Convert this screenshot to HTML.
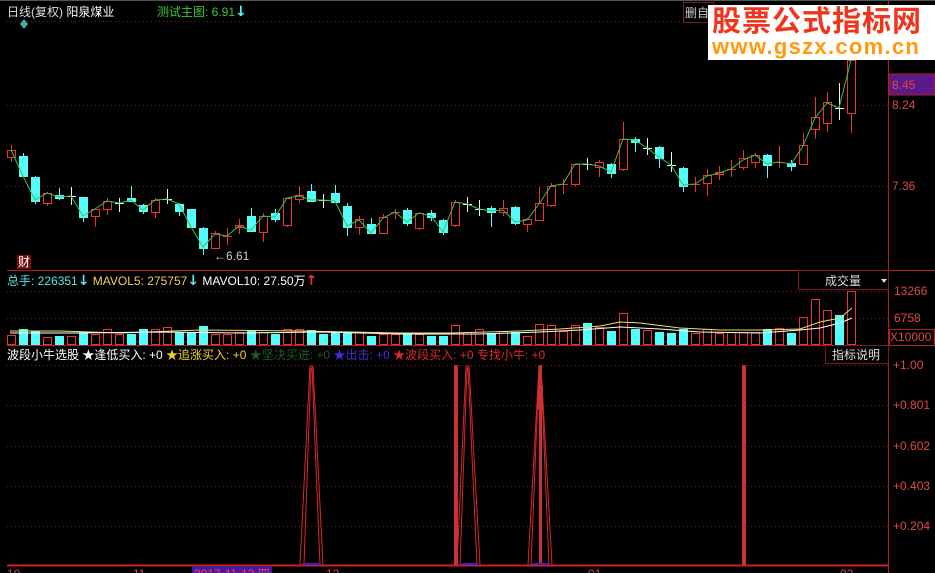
<!DOCTYPE html>
<html><head><meta charset="utf-8"><style>
html,body{margin:0;padding:0;background:#000;width:935px;height:573px;overflow:hidden;position:relative;font-family:"Liberation Sans","Noto Sans CJK SC",sans-serif;}
.t{position:absolute;white-space:nowrap;font-size:12px;line-height:14px;}
.a{font-weight:bold;font-size:14px;font-family:"DejaVu Sans",sans-serif;}
</style></head><body>
<svg width="935" height="573" style="position:absolute;left:0;top:0" shape-rendering="crispEdges">
<line x1="0" y1="0.5" x2="935" y2="0.5" stroke="#555"/>
<g stroke="#7a1a1a" stroke-dasharray="1,3">
<line x1="7" y1="21.5" x2="888" y2="21.5"/>
<line x1="7" y1="105.5" x2="888" y2="105.5"/>
<line x1="7" y1="186.5" x2="888" y2="186.5"/>
<line x1="7" y1="291.5" x2="888" y2="291.5"/>
<line x1="7" y1="318.5" x2="888" y2="318.5"/>
<line x1="7" y1="365.5" x2="888" y2="365.5"/>
<line x1="7" y1="405.5" x2="888" y2="405.5"/>
<line x1="7" y1="446.5" x2="888" y2="446.5"/>
<line x1="7" y1="486.5" x2="888" y2="486.5"/>
<line x1="7" y1="526.5" x2="888" y2="526.5"/>
</g>
<g stroke="#b02020">
<line x1="888.5" y1="0" x2="888.5" y2="573"/>
<line x1="7" y1="270.5" x2="935" y2="270.5"/>
<line x1="7" y1="345.5" x2="935" y2="345.5"/>
<line x1="7" y1="565.5" x2="888" y2="565.5" stroke="#d02020" stroke-width="2"/>
</g>
<g stroke-width="1">
<g stroke="#f03232" fill="#000">
<line x1="11.5" y1="145" x2="11.5" y2="162"/><rect x="7.5" y="150.5" width="8" height="7"/>
<line x1="47.5" y1="192" x2="47.5" y2="206"/><rect x="43.5" y="193.5" width="8" height="10"/>
<line x1="95.5" y1="209" x2="95.5" y2="227"/><rect x="91.5" y="209.5" width="8" height="7"/>
<line x1="107.5" y1="198" x2="107.5" y2="215"/><rect x="103.5" y="201.5" width="8" height="8"/>
<line x1="155.5" y1="198" x2="155.5" y2="218"/><rect x="151.5" y="200.5" width="8" height="12"/>
<line x1="215.5" y1="231" x2="215.5" y2="249"/><rect x="211.5" y="233.5" width="8" height="15"/>
<line x1="239.5" y1="219" x2="239.5" y2="234"/><rect x="235.5" y="225.5" width="8" height="2"/>
<line x1="263.5" y1="213" x2="263.5" y2="242"/><rect x="259.5" y="216.5" width="8" height="16"/>
<line x1="287.5" y1="198" x2="287.5" y2="227"/><rect x="283.5" y="198.5" width="8" height="27"/>
<line x1="299.5" y1="186" x2="299.5" y2="203"/><rect x="295.5" y="195.5" width="8" height="4"/>
<line x1="359.5" y1="216" x2="359.5" y2="235"/><rect x="355.5" y="219.5" width="8" height="8"/>
<line x1="383.5" y1="214" x2="383.5" y2="234"/><rect x="379.5" y="217.5" width="8" height="16"/>
<line x1="419.5" y1="212" x2="419.5" y2="230"/><rect x="415.5" y="213.5" width="8" height="15"/>
<line x1="455.5" y1="200" x2="455.5" y2="227"/><rect x="451.5" y="202.5" width="8" height="23"/>
<line x1="503.5" y1="200" x2="503.5" y2="216"/><rect x="499.5" y="208.5" width="8" height="4"/>
<line x1="527.5" y1="218" x2="527.5" y2="232"/><rect x="523.5" y="219.5" width="8" height="5"/>
<line x1="539.5" y1="187" x2="539.5" y2="221"/><rect x="535.5" y="203.5" width="8" height="17"/>
<line x1="551.5" y1="183" x2="551.5" y2="207"/><rect x="547.5" y="186.5" width="8" height="19"/>
<line x1="575.5" y1="164" x2="575.5" y2="186"/><rect x="571.5" y="164.5" width="8" height="20"/>
<line x1="599.5" y1="160" x2="599.5" y2="177"/><rect x="595.5" y="162.5" width="8" height="5"/>
<line x1="623.5" y1="122" x2="623.5" y2="171"/><rect x="619.5" y="139.5" width="8" height="30"/>
<line x1="707.5" y1="169" x2="707.5" y2="196"/><rect x="703.5" y="175.5" width="8" height="8"/>
<line x1="719.5" y1="166" x2="719.5" y2="180"/><rect x="715.5" y="172.5" width="8" height="2"/>
<line x1="743.5" y1="150" x2="743.5" y2="170"/><rect x="739.5" y="158.5" width="8" height="9"/>
<line x1="755.5" y1="153" x2="755.5" y2="168"/><rect x="751.5" y="155.5" width="8" height="7"/>
<line x1="803.5" y1="133" x2="803.5" y2="165"/><rect x="799.5" y="145.5" width="8" height="19"/>
<line x1="815.5" y1="97" x2="815.5" y2="139"/><rect x="811.5" y="117.5" width="8" height="12"/>
<line x1="827.5" y1="92" x2="827.5" y2="132"/><rect x="823.5" y="102.5" width="8" height="21"/>
<line x1="851.5" y1="55" x2="851.5" y2="133"/><rect x="847.5" y="60.5" width="8" height="53"/>
</g>
<g stroke="#f03232">
<line x1="227.5" y1="228" x2="227.5" y2="245"/><line x1="223" y1="236.5" x2="232" y2="236.5"/>
<line x1="395.5" y1="209" x2="395.5" y2="219"/><line x1="391" y1="212.5" x2="400" y2="212.5"/>
<line x1="563.5" y1="179" x2="563.5" y2="194"/><line x1="559" y1="184.5" x2="568" y2="184.5"/>
<line x1="695.5" y1="177" x2="695.5" y2="192"/><line x1="691" y1="184.5" x2="700" y2="184.5"/>
<line x1="731.5" y1="160" x2="731.5" y2="177"/><line x1="727" y1="169.5" x2="736" y2="169.5"/>
<line x1="779.5" y1="146" x2="779.5" y2="168"/><line x1="775" y1="162.5" x2="784" y2="162.5"/>
</g>
<g stroke="#54fcfc" fill="#54fcfc">
<line x1="23.5" y1="153" x2="23.5" y2="176"/><rect x="19.5" y="156.5" width="8" height="20"/>
<line x1="35.5" y1="176" x2="35.5" y2="204"/><rect x="31.5" y="177.5" width="8" height="24"/>
<line x1="59.5" y1="188" x2="59.5" y2="200"/><rect x="55.5" y="195.5" width="8" height="3"/>
<line x1="83.5" y1="197" x2="83.5" y2="222"/><rect x="79.5" y="197.5" width="8" height="20"/>
<line x1="131.5" y1="186" x2="131.5" y2="202"/><rect x="127.5" y="198.5" width="8" height="3"/>
<line x1="143.5" y1="204" x2="143.5" y2="214"/><rect x="139.5" y="205.5" width="8" height="6"/>
<line x1="179.5" y1="203" x2="179.5" y2="216"/><rect x="175.5" y="204.5" width="8" height="7"/>
<line x1="191.5" y1="209" x2="191.5" y2="228"/><rect x="187.5" y="209.5" width="8" height="18"/>
<line x1="203.5" y1="227" x2="203.5" y2="255"/><rect x="199.5" y="228.5" width="8" height="20"/>
<line x1="251.5" y1="208" x2="251.5" y2="232"/><rect x="247.5" y="216.5" width="8" height="15"/>
<line x1="275.5" y1="209" x2="275.5" y2="222"/><rect x="271.5" y="213.5" width="8" height="6"/>
<line x1="311.5" y1="184" x2="311.5" y2="202"/><rect x="307.5" y="191.5" width="8" height="10"/>
<line x1="335.5" y1="185" x2="335.5" y2="203"/><rect x="331.5" y="193.5" width="8" height="9"/>
<line x1="347.5" y1="203" x2="347.5" y2="236"/><rect x="343.5" y="206.5" width="8" height="21"/>
<line x1="371.5" y1="218" x2="371.5" y2="234"/><rect x="367.5" y="224.5" width="8" height="9"/>
<line x1="407.5" y1="208" x2="407.5" y2="226"/><rect x="403.5" y="210.5" width="8" height="13"/>
<line x1="431.5" y1="210" x2="431.5" y2="221"/><rect x="427.5" y="213.5" width="8" height="4"/>
<line x1="443.5" y1="219" x2="443.5" y2="235"/><rect x="439.5" y="220.5" width="8" height="12"/>
<line x1="491.5" y1="206" x2="491.5" y2="227"/><rect x="487.5" y="208.5" width="8" height="4"/>
<line x1="515.5" y1="206" x2="515.5" y2="225"/><rect x="511.5" y="207.5" width="8" height="16"/>
<line x1="611.5" y1="163" x2="611.5" y2="178"/><rect x="607.5" y="164.5" width="8" height="9"/>
<line x1="635.5" y1="137" x2="635.5" y2="152"/><rect x="631.5" y="139.5" width="8" height="3"/>
<line x1="659.5" y1="146" x2="659.5" y2="168"/><rect x="655.5" y="147.5" width="8" height="11"/>
<line x1="683.5" y1="167" x2="683.5" y2="192"/><rect x="679.5" y="168.5" width="8" height="18"/>
<line x1="767.5" y1="154" x2="767.5" y2="178"/><rect x="763.5" y="155.5" width="8" height="10"/>
<line x1="791.5" y1="160" x2="791.5" y2="171"/><rect x="787.5" y="163.5" width="8" height="3"/>
</g>
<g stroke="#e8f8ff">
<line x1="71.5" y1="187" x2="71.5" y2="205"/><line x1="67" y1="196.5" x2="76" y2="196.5"/>
<line x1="119.5" y1="198" x2="119.5" y2="212"/><line x1="115" y1="203.5" x2="124" y2="203.5"/>
<line x1="167.5" y1="189" x2="167.5" y2="204"/><line x1="163" y1="199.5" x2="172" y2="199.5"/>
<line x1="323.5" y1="194" x2="323.5" y2="208"/><line x1="319" y1="200.5" x2="328" y2="200.5"/>
<line x1="467.5" y1="197" x2="467.5" y2="212"/><line x1="463" y1="204.5" x2="472" y2="204.5"/>
<line x1="479.5" y1="200" x2="479.5" y2="216"/><line x1="475" y1="209.5" x2="484" y2="209.5"/>
<line x1="587.5" y1="158" x2="587.5" y2="170"/><line x1="583" y1="164.5" x2="592" y2="164.5"/>
<line x1="647.5" y1="138" x2="647.5" y2="155"/><line x1="643" y1="148.5" x2="652" y2="148.5"/>
<line x1="671.5" y1="152" x2="671.5" y2="172"/><line x1="667" y1="165.5" x2="676" y2="165.5"/>
<line x1="839.5" y1="83" x2="839.5" y2="120"/><line x1="835" y1="108.5" x2="844" y2="108.5"/>
</g>
</g>
<polyline shape-rendering="auto" fill="none" stroke="#3ec23e" stroke-width="1" points="11,150 23,176 35,200 47,193 59,197 71,196 83,216 95,209 107,201 119,203 131,200 143,210 155,200 167,199 179,204 191,227 203,247 215,234 227,236 239,226 251,230 263,216 275,217 287,198 299,196 311,200 323,200 335,201 347,226 359,220 371,233 383,218 395,212 407,222 419,213 431,216 443,232 455,202 467,204 479,209 491,211 503,210 515,222 527,220 539,204 551,186 563,184 575,164 587,164 599,166 611,172 623,139 635,140 647,148 659,157 671,165 683,185 695,184 707,176 719,173 731,169 743,160 755,155 767,164 779,162 791,164 803,146 815,118 827,103 839,108 851,60 855,50"/>
<g stroke="#f03232" fill="none">
<rect x="7.5" y="335.5" width="8" height="9"/><rect x="43.5" y="337.5" width="8" height="7"/><rect x="91.5" y="334.5" width="8" height="10"/><rect x="103.5" y="329.5" width="8" height="15"/><rect x="151.5" y="329.5" width="8" height="15"/><rect x="211.5" y="334.5" width="8" height="10"/><rect x="235.5" y="332.5" width="8" height="12"/><rect x="259.5" y="332.5" width="8" height="12"/><rect x="283.5" y="329.5" width="8" height="15"/><rect x="295.5" y="329.5" width="8" height="15"/><rect x="355.5" y="332.5" width="8" height="12"/><rect x="379.5" y="334.5" width="8" height="10"/><rect x="415.5" y="334.5" width="8" height="10"/><rect x="451.5" y="325.5" width="8" height="19"/><rect x="499.5" y="331.5" width="8" height="13"/><rect x="523.5" y="336.5" width="8" height="8"/><rect x="535.5" y="324.5" width="8" height="20"/><rect x="547.5" y="325.5" width="8" height="19"/><rect x="559.5" y="331.5" width="8" height="13"/><rect x="571.5" y="325.5" width="8" height="19"/><rect x="595.5" y="327.5" width="8" height="17"/><rect x="619.5" y="313.5" width="8" height="31"/><rect x="643.5" y="330.5" width="8" height="14"/><rect x="691.5" y="333.5" width="8" height="11"/><rect x="703.5" y="329.5" width="8" height="15"/><rect x="715.5" y="333.5" width="8" height="11"/><rect x="739.5" y="332.5" width="8" height="12"/><rect x="751.5" y="332.5" width="8" height="12"/><rect x="775.5" y="328.5" width="8" height="16"/><rect x="799.5" y="317.5" width="8" height="27"/><rect x="811.5" y="299.5" width="8" height="45"/><rect x="823.5" y="310.5" width="8" height="34"/><rect x="847.5" y="291.5" width="8" height="53"/>
<rect x="67.5" y="336.5" width="8" height="8"/><rect x="115.5" y="334.5" width="8" height="10"/><rect x="163.5" y="327.5" width="8" height="17"/><rect x="223.5" y="334.5" width="8" height="10"/><rect x="391.5" y="334.5" width="8" height="10"/><rect x="463.5" y="332.5" width="8" height="12"/><rect x="475.5" y="329.5" width="8" height="15"/><rect x="727.5" y="332.5" width="8" height="12"/>
</g>
<g fill="#54fcfc">
<rect x="19" y="329" width="9" height="16"/><rect x="31" y="331" width="9" height="14"/><rect x="55" y="336" width="9" height="9"/><rect x="79" y="332" width="9" height="13"/><rect x="127" y="334" width="9" height="11"/><rect x="139" y="329" width="9" height="16"/><rect x="175" y="332" width="9" height="13"/><rect x="187" y="332" width="9" height="13"/><rect x="199" y="326" width="9" height="19"/><rect x="247" y="330" width="9" height="15"/><rect x="271" y="334" width="9" height="11"/><rect x="307" y="330" width="9" height="15"/><rect x="319" y="334" width="9" height="11"/><rect x="331" y="332" width="9" height="13"/><rect x="343" y="332" width="9" height="13"/><rect x="367" y="336" width="9" height="9"/><rect x="403" y="334" width="9" height="11"/><rect x="427" y="336" width="9" height="9"/><rect x="439" y="336" width="9" height="9"/><rect x="487" y="333" width="9" height="12"/><rect x="511" y="332" width="9" height="13"/><rect x="583" y="323" width="9" height="22"/><rect x="607" y="331" width="9" height="14"/><rect x="631" y="329" width="9" height="16"/><rect x="655" y="332" width="9" height="13"/><rect x="667" y="333" width="9" height="12"/><rect x="679" y="329" width="9" height="16"/><rect x="763" y="329" width="9" height="16"/><rect x="787" y="333" width="9" height="12"/><rect x="835" y="315" width="9" height="30"/>
</g>
<polyline shape-rendering="auto" fill="none" stroke="#f0e060" points="10,331 60,331 120,333 200,330 300,331 400,333 450,333 520,331 560,329 600,326 620,322 640,323 680,328 720,330 760,330 800,329 820,322 840,318 852,308"/>
<polyline shape-rendering="auto" fill="none" stroke="#ffffff" points="10,333 80,333 160,332 240,333 320,332 400,334 480,334 540,332 580,330 620,327 660,329 700,332 760,333 800,330 820,328 840,323 852,318"/>
<g fill="none" stroke="#d82828" shape-rendering="auto">
<polyline points="300,565 310,366 313,366 323,565"/>
<polyline points="304,565 311,368 312,368 320,565"/>
<polyline points="457,565 466,366 469,366 480,565"/>
<polyline points="460,565 467,368 468,368 477,565"/>
<polyline points="528,565 539,366 541,366 552,565"/>
<polyline points="531,565 539,370 541,370 549,565"/>
</g>
<rect x="454" y="365" width="4" height="200" fill="#c83232"/>
<rect x="539" y="365" width="3" height="200" fill="#c83232"/>
<rect x="538" y="385" width="5" height="25" fill="#c83232"/>
<rect x="742" y="365" width="4" height="200" fill="#c83232"/>
<g stroke="#4020c0" stroke-width="2"><line x1="302" y1="564" x2="321" y2="564"/><line x1="460" y1="564" x2="478" y2="564"/><line x1="532" y1="564" x2="550" y2="564"/></g>
<rect x="798.5" y="270.5" width="90" height="19" fill="#000" stroke="#7a1a1a"/>
<rect x="825.5" y="345.5" width="63" height="18" fill="#000" stroke="#7a1a1a"/>
<rect x="889" y="74" width="46" height="21" fill="#5a1a8a" stroke="#b02020"/>
<rect x="889.5" y="329.5" width="45" height="16" fill="none" stroke="#b02020"/>
<rect x="683.5" y="2.5" width="30" height="20" fill="#000" stroke="#7a1a1a"/>
<rect x="192" y="566" width="80" height="7" fill="#4a1a9a"/>
<rect x="17" y="255" width="14" height="14" fill="#7a0e0e"/>
<path d="M24 19 L28 24 L24 29 L20 24 Z" fill="#3cb0a0"/>
<path d="M881 279 L887 279 L884 283 Z" fill="#ddd"/>
</svg>

<div class="t" style="left:7px;top:5px;color:#ddd">日线(复权) <span style="color:#fff">阳泉煤业</span></div>
<div class="t" style="left:157px;top:5px;color:#3ec83e">测试主图: 6.91<span class="a" style="color:#54fcfc">↓</span></div>
<div class="t" style="left:685px;top:6px;color:#ccc">删自</div>
<div style="position:absolute;left:708px;top:5px;width:227px;height:55px;background:#fff"></div>
<div class="t" style="left:712px;top:6px;font-size:29px;line-height:32px;font-weight:bold;color:#f0341e;letter-spacing:1px">股票公式指标网</div>
<div class="t" style="left:712px;top:35px;font-size:22px;line-height:24px;font-weight:bold;color:#ff9a10;letter-spacing:1.3px">www.gszx.com.cn</div>
<div class="t" style="left:892px;top:78px;color:#e04848">8.45</div>
<div class="t" style="left:892px;top:98px;color:#e04848">8.24</div>
<div class="t" style="left:892px;top:179px;color:#e04848">7.36</div>
<div class="t" style="left:214px;top:249px;color:#ccc">←6.61</div>
<div class="t" style="left:18px;top:255px;color:#fff">财</div>
<div class="t" style="left:7px;top:274px;color:#54e8e8">总手: 226351<span class="a">↓</span> <span style="color:#f0d050">MAVOL5: 275757</span><span class="a">↓</span> <span style="color:#fff">MAVOL10: 27.50万</span><span class="a" style="color:#f03030">↑</span></div>
<div class="t" style="left:825px;top:274px;color:#ddd">成交量</div>
<div class="t" style="left:894px;top:284px;color:#e04848">13266</div>
<div class="t" style="left:894px;top:311px;color:#e04848">6758</div>
<div class="t" style="left:890px;top:330px;color:#e04848">X10000</div>
<div class="t" style="left:7px;top:348px;color:#fff">波段小牛选股 ★逢低买入: +0 <span style="color:#f0d030">★追涨买入: +0</span> <span style="color:#1e5a28">★坚决买进: +0</span> <span style="color:#4a2ad8">★出击: +0</span> <span style="color:#e02828">★波段买入: +0 专找小牛: +0</span></div>
<div class="t" style="left:832px;top:348px;color:#ddd">指标说明</div>
<div class="t" style="left:893px;top:358px;color:#e04848">+1.00</div>
<div class="t" style="left:893px;top:398px;color:#e04848">+0.801</div>
<div class="t" style="left:893px;top:439px;color:#e04848">+0.602</div>
<div class="t" style="left:893px;top:479px;color:#e04848">+0.403</div>
<div class="t" style="left:893px;top:519px;color:#e04848">+0.204</div>
<div class="t" style="left:7px;top:567px;color:#e04848">10</div>
<div class="t" style="left:133px;top:567px;color:#e04848">11</div>
<div class="t" style="left:194px;top:567px;color:#e04848">2017-11-13 四</div>
<div class="t" style="left:326px;top:567px;color:#e04848">12</div>
<div class="t" style="left:588px;top:567px;color:#e04848">01</div>
<div class="t" style="left:840px;top:567px;color:#e04848">02</div>
</body></html>
